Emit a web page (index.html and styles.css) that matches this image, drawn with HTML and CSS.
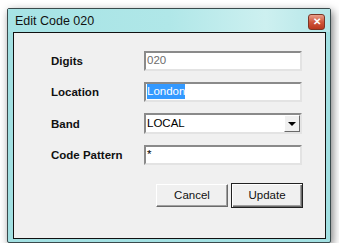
FILE: index.html
```html
<!DOCTYPE html>
<html lang="en">

<head>
    <meta charset="UTF-8">
    <title>Edit Code 020</title>
    <link rel="stylesheet" href="styles.css">
</head>

<body>
    <div class="window">
        <div class="titlebar">
            <span class="title">Edit Code 020</span>
            <span class="close">&#x2715;</span>
        </div>
        <div class="client">
            <div class="row">
                <label>Digits</label>
                <div class="field disabled">020</div>
            </div>
            <div class="row">
                <label>Location</label>
                <div class="field"><span class="sel">London</span></div>
            </div>
            <div class="row row-band">
                <label>Band</label>
                <div class="field combo">
                    <span class="combo-text">LOCAL</span>
                    <span class="combo-btn"><span class="arrow"></span></span>
                </div>
            </div>
            <div class="row row-pattern">
                <label>Code Pattern</label>
                <div class="field">*</div>
            </div>
            <div class="buttons">
                <div class="btn">Cancel</div>
                <div class="btn default">Update</div>
            </div>
        </div>
    </div>
</body>

</html>
```

FILE: styles.css
```css
* {
    box-sizing: border-box;
    padding: 0;
    margin: 0;
}

body {
    background: #fff;
    font-family: "Liberation Sans", Arial, sans-serif;
    font-size: 11px;
    color: #000;
}

.window {
    width: 324px;
    height: 235px;
    margin: 8px 0 0 7px;
    border: 1px solid #3a4a4c;
    border-radius: 2px;
    background: #a2e0e2;
    padding: 0 4px 3px 5px;
    display: flex;
    flex-direction: column;
    box-shadow: 2px 3px 8px rgba(0, 0, 0, 0.5);
}

.titlebar {
    height: 23px;
    margin: 0 -4px 0 -5px;
    padding: 0 5px 0 7px;
    display: flex;
    align-items: center;
    justify-content: space-between;
    background: linear-gradient(to right, #a6e3e5, #b0e7e8 50%, #cdf0f0 80%, #b4e6e8);
}

.title {
    font-size: 12.5px;
    color: #111;
    margin-top: 1px;
}

.close {
    width: 17px;
    height: 16px;
    margin-top: 2px;
    border: 1px solid #7a3626;
    border-radius: 3px;
    background: linear-gradient(#e9a08c, #d0573c 50%, #b9371e);
    color: #fff;
    font-size: 10px;
    font-weight: bold;
    line-height: 14px;
    text-align: center;
}

.client {
    flex: 1;
    border: 1px solid #111;
    background: #f0f0f0;
    padding: 18px 22px 0 37px;
}

.row {
    display: flex;
    align-items: center;
    height: 20px;
    margin-bottom: 11px;
}

.row-band {
    margin-bottom: 11px;
    height: 21px;
}

.row label {
    width: 93px;
    font-size: 11.5px;
    font-weight: bold;
    color: #111;
}

.field {
    width: 158px;
    height: 20px;
    background: #fff;
    border: 2px solid;
    border-color: #8a8a8a #e3e3e3 #e3e3e3 #8a8a8a;
    padding: 0 1px;
    line-height: 15px;
    font-size: 11.5px;
}

.disabled {
    color: #6d6d6d;
}

.sel {
    background: #3399ff;
    color: #fff;
    display: inline-block;
    line-height: 15px;
}

.combo {
    height: 21px;
    display: flex;
    align-items: center;
    justify-content: space-between;
    padding-right: 0;
}

.combo-text {
    color: #000;
}

.combo-btn {
    width: 16px;
    height: 17px;
    background: #f0f0f0;
    border: 1px solid;
    border-color: #fff #6a6a6a #6a6a6a #fff;
    display: flex;
    align-items: center;
    justify-content: center;
}

.arrow {
    width: 0;
    height: 0;
    border-left: 4px solid transparent;
    border-right: 4px solid transparent;
    border-top: 4px solid #000;
}

.buttons {
    display: flex;
    justify-content: flex-end;
    gap: 3px;
    margin-top: 19px;
}

.btn {
    width: 72px;
    height: 23px;
    background: #f0f0f0;
    border: 1px solid;
    border-color: #fff #6a6a6a #6a6a6a #fff;
    box-shadow: inset -1px -1px 0 #a0a0a0;
    text-align: center;
    line-height: 20px;
    font-size: 11.5px;
    color: #111;
}

.default {
    width: 72px;
    height: 25px;
    margin-top: -1px;
    border: 1px solid #222;
    box-shadow: inset 1px 1px 0 #fff, inset -1px -1px 0 #6a6a6a, inset -2px -2px 0 #a0a0a0;
    line-height: 22px;
}
```
